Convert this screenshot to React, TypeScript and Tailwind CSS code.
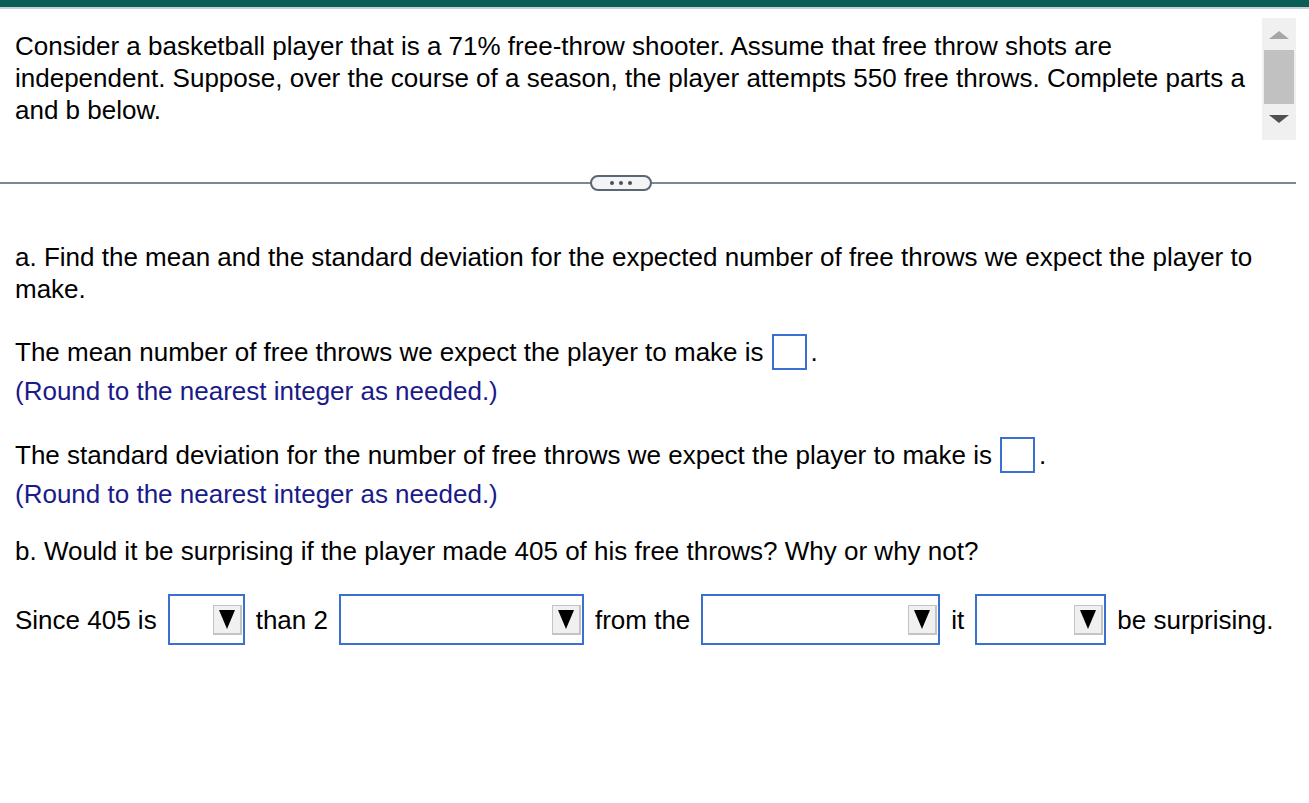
import React from 'react';

const Box = () => (
    <span className="inline-block align-middle w-[35px] h-[36px] border-2 border-[#3b6fd0] bg-white ml-[8px] mr-[4px]" />
);

const Select = ({ width }: { width: string }) => (
    <span className={`shrink-0 inline-flex items-center justify-end align-middle h-[51px] border-2 border-[#3b6fd0] bg-white pr-[1px] mx-[11px] ${width}`}>
        <span className="flex items-center justify-center w-[29px] h-[30px] bg-[#f0f0f0] border border-[#c4c4c4] border-b-2 border-r-2">
            <svg width="18" height="22" viewBox="0 0 18 22">
                <polygon points="1,2 17,2 9,21" fill="#000" />
            </svg>
        </span>
    </span>
);

export default function App() {
    return (
        <div className="w-[1309px] h-[803px] bg-white text-black overflow-hidden" style={{ fontFamily: '"Liberation Sans", Arial, sans-serif' }}>
            {/* top bar */}
            <div className="h-[7px] bg-[#0a5e56]" />
            <div className="h-[2px] bg-[#c9ced3]" />

            {/* question stem */}
            <div className="flex pt-[9px]">
                <p className="w-[1250px] pl-[15px] pt-[12px] text-[26px] leading-[32px]">
                    Consider a basketball player that is a 71% free-throw shooter. Assume that free throw shots are independent. Suppose, over the course of a season, the player attempts 550 free throws. Complete parts a and b below.
                </p>
                <div className="ml-[12px] w-[34px] h-[122px] bg-[#f0f0f0] flex flex-col items-center pt-[12px]">
                    <svg width="22" height="10" viewBox="0 0 22 10"><polygon points="11,1 21,9 1,9" fill="#a6a6a6" /></svg>
                    <div className="mt-[10px] w-[30px] h-[54px] bg-[#c1c1c1]" />
                    <svg className="mt-[10px]" width="22" height="10" viewBox="0 0 22 10"><polygon points="1,1 21,1 11,9" fill="#505050" /></svg>
                </div>
            </div>

            {/* divider */}
            <div className="relative w-[1296px] mt-[42px] h-[2px] bg-[#7d8894]">
                <div className="absolute left-[590px] top-[-7px] w-[62px] h-[16px] rounded-full border-2 border-[#5b6673] bg-[#f3f4f6] flex items-center justify-center gap-[5px]">
                    <span className="w-[4px] h-[4px] rounded-full bg-[#4a4f57]" />
                    <span className="w-[4px] h-[4px] rounded-full bg-[#4a4f57]" />
                    <span className="w-[4px] h-[4px] rounded-full bg-[#4a4f57]" />
                </div>
            </div>

            {/* part a */}
            <div className="pl-[15px] pr-[40px] text-[26px] leading-[32px]">
                <p className="mt-[57px]">
                    a. Find the mean and the standard deviation for the expected number of free throws we expect the player to make.
                </p>
                <p className="mt-[27px] h-[40px] flex items-center">
                    The mean number of free throws we expect the player to make is<Box />.
                </p>
                <p className="text-[#1a1a8a] mt-[3px]">(Round to the nearest integer as needed.)</p>

                <p className="mt-[28px] h-[40px] flex items-center">
                    The standard deviation for the number of free throws we expect the player to make is<Box />.
                </p>
                <p className="text-[#1a1a8a] mt-[3px]">(Round to the nearest integer as needed.)</p>

                {/* part b */}
                <p className="mt-[25px]">b. Would it be surprising if the player made 405 of his free throws? Why or why not?</p>
                <div className="mt-[27px] flex items-center h-[51px] whitespace-nowrap">
                    <span>Since 405 is</span>
                    <Select width="w-[77px]" />
                    <span>than 2</span>
                    <Select width="w-[245px]" />
                    <span>from the</span>
                    <Select width="w-[239px]" />
                    <span>it</span>
                    <Select width="w-[131px]" />
                    <span>be surprising.</span>
                </div>
            </div>
        </div>
    );
}
